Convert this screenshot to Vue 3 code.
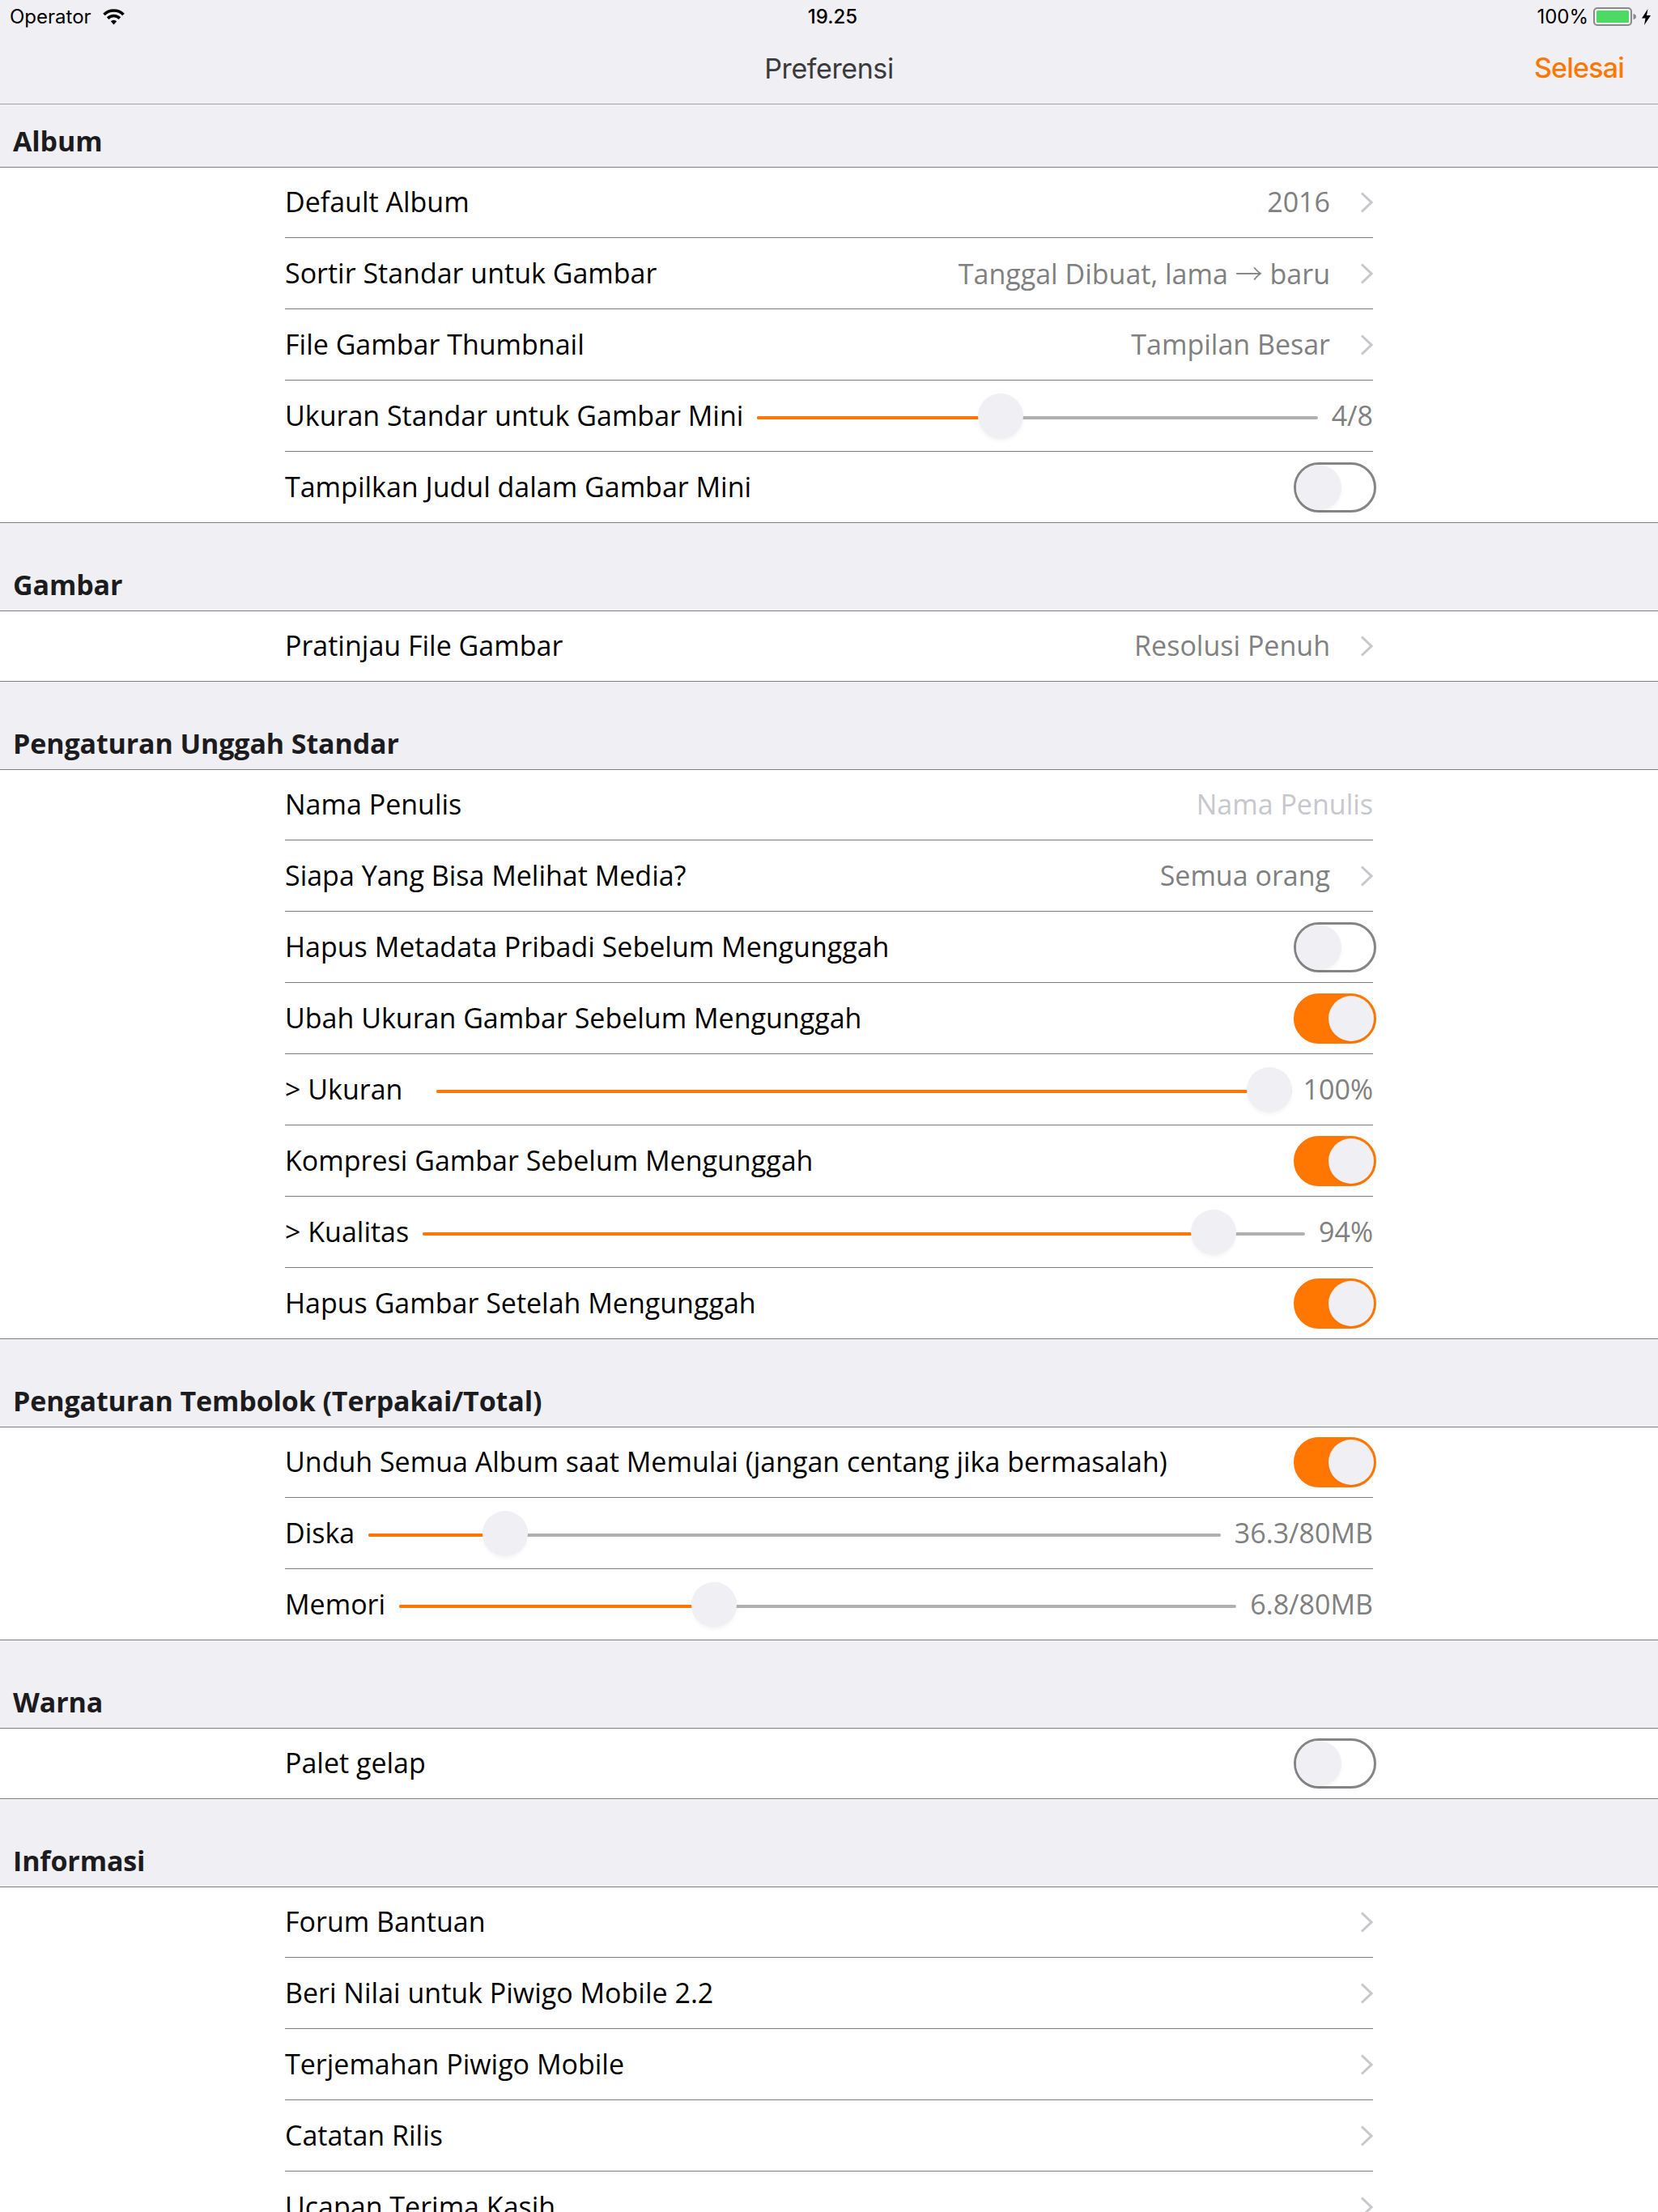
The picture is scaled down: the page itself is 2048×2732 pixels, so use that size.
<script setup>
const sections = [
  { title: 'Album', first: true, rows: [
    { label: 'Default Album', type: 'link', value: '2016' },
    { label: 'Sortir Standar untuk Gambar', type: 'link', value: 'Tanggal Dibuat, lama\u00a0', arrow: '\u00a0baru' },
    { label: 'File Gambar Thumbnail', type: 'link', value: 'Tampilan Besar' },
    { label: 'Ukuran Standar untuk Gambar Mini', type: 'slider', value: '4/8', pct: 0.4286 },
    { label: 'Tampilkan Judul dalam Gambar Mini', type: 'switch', on: false },
  ]},
  { title: 'Gambar', rows: [
    { label: 'Pratinjau File Gambar', type: 'link', value: 'Resolusi Penuh' },
  ]},
  { title: 'Pengaturan Unggah Standar', rows: [
    { label: 'Nama Penulis', type: 'input', value: 'Nama Penulis' },
    { label: 'Siapa Yang Bisa Melihat Media?', type: 'link', value: 'Semua orang' },
    { label: 'Hapus Metadata Pribadi Sebelum Mengunggah', type: 'switch', on: false },
    { label: 'Ubah Ukuran Gambar Sebelum Mengunggah', type: 'switch', on: true },
    { label: '> Ukuran', type: 'slider', value: '100%', pct: 1, inset: true },
    { label: 'Kompresi Gambar Sebelum Mengunggah', type: 'switch', on: true },
    { label: '> Kualitas', type: 'slider', value: '94%', pct: 0.918 },
    { label: 'Hapus Gambar Setelah Mengunggah', type: 'switch', on: true },
  ]},
  { title: 'Pengaturan Tembolok (Terpakai/Total)', rows: [
    { label: 'Unduh Semua Album saat Memulai (jangan centang jika bermasalah)', type: 'switch', on: true },
    { label: 'Diska', type: 'slider', value: '36.3/80MB', pct: 0.141 },
    { label: 'Memori', type: 'slider', value: '6.8/80MB', pct: 0.369 },
  ]},
  { title: 'Warna', rows: [
    { label: 'Palet gelap', type: 'switch', on: false },
  ]},
  { title: 'Informasi', rows: [
    { label: 'Forum Bantuan', type: 'link' },
    { label: 'Beri Nilai untuk Piwigo Mobile 2.2', type: 'link' },
    { label: 'Terjemahan Piwigo Mobile', type: 'link' },
    { label: 'Catatan Rilis', type: 'link' },
    { label: 'Ucapan Terima Kasih', type: 'link' },
  ]},
]
const fillWidth = (pct) => `calc(28px + (100% - 56px) * ${pct})`
</script>

<template>
  <div class="page">
    <header class="nav">
      <div class="status">
        <div class="status-left">
          <span>Operator</span>
          <svg class="wifi" viewBox="0 0 27 20" width="27" height="20">
            <path d="M1.5 7A17 17 0 0 1 25.500 7" fill="none" stroke="#000" stroke-width="3.6"/>
            <path d="M6.100 11.600A10.500 10.500 0 0 1 20.900 11.600" fill="none" stroke="#000" stroke-width="3.600"/>
            <path d="M13.500 19.500L9.800 15.300A5.200 5.200 0 0 1 17.200 15.300Z" fill="#000"/>
          </svg>
        </div>
        <div class="status-time">19.25</div>
        <div class="status-right">
          <span>100%</span>
          <svg class="battery" viewBox="0 0 54 23" width="54" height="23">
            <rect x="1" y="1" width="46" height="21" rx="4" fill="none" stroke="#8a8a8a" stroke-width="2"/>
            <rect x="4" y="4" width="40" height="15" rx="1.500" fill="#4cd964"/>
            <path d="M49.500 8C52 8.500 53 10 53 11.500C53 13 52 14.500 49.500 15Z" fill="#8a8a8a"/>
          </svg>
          <svg class="bolt" viewBox="0 0 11 20" width="11" height="20">
            <path d="M7.500 0L0 11.500H4.500L3 20L11 8H6Z" fill="#000"/>
          </svg>
        </div>
      </div>
      <div class="bar">
        <div class="title">Preferensi</div>
        <div class="done">Selesai</div>
      </div>
    </header>

    <section v-for="section in sections" :key="section.title" class="section">
      <h2 class="head" :class="{ 'head-first': section.first }">{{ section.title }}</h2>
      <div class="group">
        <div class="rows">
          <div v-for="row in section.rows" :key="row.label" class="row">
            <span class="label">{{ row.label }}</span>

            <template v-if="row.type === 'link'">
              <span v-if="row.value" class="value">{{ row.value }}<span v-if="row.arrow" class="arrow">→</span>{{ row.arrow }}</span>
              <svg class="chev" viewBox="0 0 16 26" width="16" height="26">
                <path d="M2 1.500L14 13L2 24.500" fill="none" stroke="#c7c7cc" stroke-width="3"/>
              </svg>
            </template>

            <span v-else-if="row.type === 'input'" class="placeholder">{{ row.value }}</span>

            <template v-else-if="row.type === 'slider'">
              <div class="slider" :class="{ inset: row.inset }">
                <div class="track"></div>
                <div class="track fill" :style="{ width: fillWidth(row.pct) }"></div>
                <div class="thumb" :style="{ left: fillWidth(row.pct) }"></div>
              </div>
              <span class="slider-value">{{ row.value }}</span>
            </template>

            <div v-else class="switch" :class="{ on: row.on }">
              <div class="knob"></div>
            </div>
          </div>
        </div>
      </div>
    </section>
  </div>
</template>

<style>
html, body { margin: 0; background: #efeff4; }
</style>

<style scoped>
.page {
  width: 2048px;
  height: 2732px;
  overflow: hidden;
  background: #efeff4;
  font-family: "Open Sans", "DejaVu Sans", sans-serif;
  font-size: 34px;
  color: #000;
}
.nav {
  height: 129px;
  box-sizing: border-box;
  border-bottom: 1px solid #a4a4a8;
}
.status {
  height: 40px;
  box-sizing: border-box;
  padding: 1px 9px 0 12px;
  display: grid;
  grid-template-columns: 1fr auto 1fr;
  align-items: center;
  font-family: Inter, sans-serif;
  font-size: 24px;
}
.status-left { display: flex; align-items: center; gap: 14px; }
.status-time { font-weight: 500; padding-left: 6px; }
.status-right { display: flex; align-items: center; justify-content: flex-end; gap: 6px; }
.bar {
  height: 88px;
  position: relative;
  display: flex;
  align-items: center;
  justify-content: center;
}
.title {
  color: #3a3a3c;
  font-family: Inter, sans-serif;
  font-size: 34px;
  letter-spacing: -0.4px;
}
.done {
  position: absolute;
  right: 42px;
  top: 24px;
  color: #ff7700;
  font-family: Inter, sans-serif;
  font-weight: 500;
  font-size: 34px;
  letter-spacing: -0.8px;
  line-height: 40px;
}
.head {
  margin: 0;
  box-sizing: border-box;
  height: 109px;
  border-bottom: 1px solid #808080;
  padding: 0 16px 9px;
  display: flex;
  align-items: flex-end;
  font-size: 34px;
  font-weight: 700;
  line-height: 46px;
  letter-spacing: -0.12px;
  color: #1c1c1e;
}
.head-first { height: 78px; }
.group {
  background: #fff;
  border-bottom: 1px solid #808080;
}
.rows { width: 1344px; margin: 0 auto; }
.row {
  height: 88px;
  box-sizing: border-box;
  border-bottom: 1px solid #808080;
  display: flex;
  align-items: center;
  gap: 17px;
}
.row:first-child { height: 87px; }
.row:last-child { border-bottom: none; height: 87px; }
.row:only-child { height: 86px; }
.label, .value, .placeholder, .slider-value { padding-bottom: 2px; white-space: nowrap; }
.label { margin-right: auto; }
.value { color: #808080; margin-right: 20px; }
.arrow {
  font-family: "Noto Sans CJK JP", sans-serif;
  font-weight: 300;
}
.placeholder { color: #c7c7cd; }
.chev { flex: none; }
.slider {
  flex: 1;
  position: relative;
  height: 56px;
}
.slider.inset { margin: 0 -3px 0 25px; }
.slider-value { color: #808080; }
.track {
  position: absolute;
  left: 0;
  right: 0;
  top: 28px;
  height: 4px;
  border-radius: 2px;
  background: #b0b0b0;
}
.fill { right: auto; background: #ff7700; }
.thumb {
  position: absolute;
  top: 0;
  width: 56px;
  height: 56px;
  margin-left: -28px;
  border-radius: 50%;
  background: #efeff4;
  box-shadow: 0 3px 4px rgba(0, 0, 0, 0.04);
}
.switch {
  flex: none;
  width: 102px;
  height: 62px;
  box-sizing: border-box;
  border: 3px solid #858585;
  border-radius: 31px;
  margin-right: -4px;
  position: relative;
  background: #fff;
}
.knob {
  position: absolute;
  top: 0;
  left: 0;
  width: 56px;
  height: 56px;
  border-radius: 50%;
  background: #efeff4;
  box-shadow: 0 3px 4px rgba(0, 0, 0, 0.04);
}
.switch.on { background: #ff7700; border-color: #ff7700; }
.switch.on .knob { left: 40px; }
</style>
